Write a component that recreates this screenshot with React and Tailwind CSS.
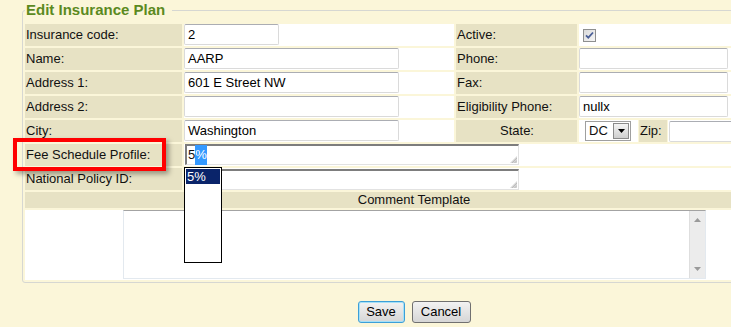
import React from "react";

/**
 * Edit Insurance Plan form
 * Old-school table form with a fieldset, autocomplete popup and a highlight callout
 */

const CREAM = "bg-[#fbf6d9]";
const BEIGE = "bg-[#e7e2c4]";

function Label({ children, center = false }) {
  return (
    <div className={`${BEIGE} h-[22px] flex items-center pl-[1px] ${center ? "justify-center" : ""}`}>
      {children}
    </div>
  );
}

function TextBox({ value = "", width }) {
  return (
    <div
      className="h-[21px] bg-white border border-[#dadada] border-t-[#abadb3] rounded-[2px] flex items-center pl-[3px] text-black"
      style={{ width }}
    >
      {value}
    </div>
  );
}

function Grip() {
  return (
    <svg className="absolute right-[1px] bottom-[1px]" width="7" height="7" viewBox="0 0 7 7">
      <path d="M7 0 L7 7 L0 7 Z" fill="#d6d6d6" />
      <path d="M7 2 L2 7 M7 4.5 L4.5 7" stroke="#bcbcbc" strokeWidth="1" />
    </svg>
  );
}

function InsetBox({ children }) {
  return (
    <div className="relative ml-[1px] w-[334px] h-[21px] bg-white border-t-2 border-l-2 border-[#7d7d7d] border-b border-r border-b-[#e2e2e2] border-r-[#e2e2e2] flex items-center pl-[1px]">
      {children}
      <Grip />
    </div>
  );
}

function Checkbox() {
  return (
    <svg width="13" height="13" viewBox="0 0 13 13">
      <defs>
        <linearGradient id="cb" x1="0" y1="0" x2="1" y2="1">
          <stop offset="0" stopColor="#d9d9d9" />
          <stop offset="1" stopColor="#f7f7f7" />
        </linearGradient>
      </defs>
      <rect x="0.5" y="0.5" width="12" height="12" fill="url(#cb)" stroke="#8e8f8f" />
      <path d="M3 6.3 L5.3 8.7 L10 3.5" fill="none" stroke="#4a5f97" strokeWidth="1.8" />
    </svg>
  );
}

function StateSelect() {
  return (
    <div className="w-[46px] h-[20px] bg-white border border-[#9f9f9f] flex items-center">
      <span className="pl-[3px] flex-1">DC</span>
      <div className="w-[16px] h-[16px] mr-[1px] border border-[#8a8a8a] bg-gradient-to-b from-[#f4f4f4] to-[#cfcfcf] flex items-center justify-center">
        <svg width="7" height="4" viewBox="0 0 7 4">
          <path d="M0 0 L7 0 L3.5 4 Z" fill="#000" />
        </svg>
      </div>
    </div>
  );
}

function ScrollTrack() {
  return (
    <div className="w-[16px] h-full bg-[#ececec] border-l border-[#dedede] flex flex-col items-center justify-between py-[7px]">
      <svg width="7" height="4" viewBox="0 0 7 4">
        <path d="M0 4 L7 4 L3.5 0 Z" fill="#9a9a9a" />
      </svg>
      <svg width="7" height="4" viewBox="0 0 7 4">
        <path d="M0 0 L7 0 L3.5 4 Z" fill="#9a9a9a" />
      </svg>
    </div>
  );
}

export default function App() {
  return (
    <div className={`relative w-[731px] h-[327px] overflow-hidden ${CREAM} font-['Liberation_Sans',Arial,sans-serif] text-[13px] text-[#111]`}>
      {/* Form fieldset */}
      <fieldset className="ml-[22px] w-[784px] border border-[#d6d7d2] rounded-[3px] px-[2px] pt-[4px] pb-[2px]">
        <legend className="ml-0 pl-[1px] pr-[7px] text-[15px] leading-[20px] font-bold text-[#5b8a1f]">
          Edit Insurance Plan
        </legend>

        <div className="grid grid-cols-[157px_270px_121px_224px] gap-[2px]">
          {/* Row 1 */}
          <Label>Insurance code:</Label>
          <div className="bg-white h-[22px]"><TextBox value="2" width={95} /></div>
          <Label>Active:</Label>
          <div className="bg-white h-[22px] flex items-center pl-[4px]"><Checkbox /></div>

          {/* Row 2 */}
          <Label>Name:</Label>
          <div className="bg-white h-[22px]"><TextBox value="AARP" width={215} /></div>
          <Label>Phone:</Label>
          <div className="bg-white h-[22px]"><TextBox width={149} /></div>

          {/* Row 3 */}
          <Label>Address 1:</Label>
          <div className="bg-white h-[22px]"><TextBox value="601 E Street NW" width={215} /></div>
          <Label>Fax:</Label>
          <div className="bg-white h-[22px]"><TextBox width={149} /></div>

          {/* Row 4 */}
          <Label>Address 2:</Label>
          <div className="bg-white h-[22px]"><TextBox width={215} /></div>
          <Label>Eligibility Phone:</Label>
          <div className="bg-white h-[22px]"><TextBox value="nullx" width={149} /></div>

          {/* Row 5 */}
          <Label>City:</Label>
          <div className="bg-white h-[22px]"><TextBox value="Washington" width={215} /></div>
          <Label center>State:</Label>
          <div className="h-[22px] flex gap-[1px] overflow-hidden">
            <div className="bg-white w-[59px] shrink-0 flex items-center pl-[6px]"><StateSelect /></div>
            <div className={`${BEIGE} w-[28px] shrink-0 flex items-center pl-[1px]`}>Zip:</div>
            <div className="bg-white flex-1 min-w-0 pl-[1px] pt-[1px]"><TextBox width={140} /></div>
          </div>

          {/* Row 6 */}
          <Label>Fee Schedule Profile:</Label>
          <div className="col-span-3 bg-white h-[22px]">
            <InsetBox>
              <span>5</span>
              <span className="bg-[#3399ff] text-white">%</span>
            </InsetBox>
          </div>

          {/* Row 7 */}
          <Label>National Policy ID:</Label>
          <div className="col-span-3 bg-white h-[22px] pt-[1px]">
            <InsetBox />
          </div>

          {/* Comment template */}
          <div className={`col-span-4 ${BEIGE} h-[16px] flex items-center justify-center`}>Comment Template</div>
          <div className="col-span-4 bg-white h-[70px] flex justify-center">
            <div className="w-[583px] h-[69px] bg-white border border-[#e3e9ef] border-t-[#a3a3a3] flex justify-end">
              <ScrollTrack />
            </div>
          </div>
        </div>
      </fieldset>

      {/* Buttons */}
      <div className="ml-[22px] w-[784px] mt-[18px] flex justify-center gap-[7px]">
        <button className="w-[47px] h-[22px] rounded-[3px] border border-[#3c9fd8] bg-gradient-to-b from-[#f2f2f2] to-[#d6d6d6] shadow-[inset_0_0_0_1px_#a6e0f7] text-[13px] text-black">
          Save
        </button>
        <button className="w-[59px] h-[22px] rounded-[3px] border border-[#707070] bg-gradient-to-b from-[#f2f2f2] to-[#d6d6d6] text-[13px] text-black">
          Cancel
        </button>
      </div>

      {/* Autocomplete popup */}
      <div className="absolute left-[184px] top-[167px] w-[38px] h-[96px] bg-white border border-black p-[1px]">
        <div className="bg-[#0a246a] text-white h-[15px] leading-[15px] pl-[1px]">5%</div>
      </div>

      {/* Highlight callout */}
      <div className="absolute left-[13px] top-[138px] w-[153px] h-[33px] border-4 border-[#ff0000] shadow-[3px_3px_5px_rgba(0,0,0,0.35)]" />
    </div>
  );
}
